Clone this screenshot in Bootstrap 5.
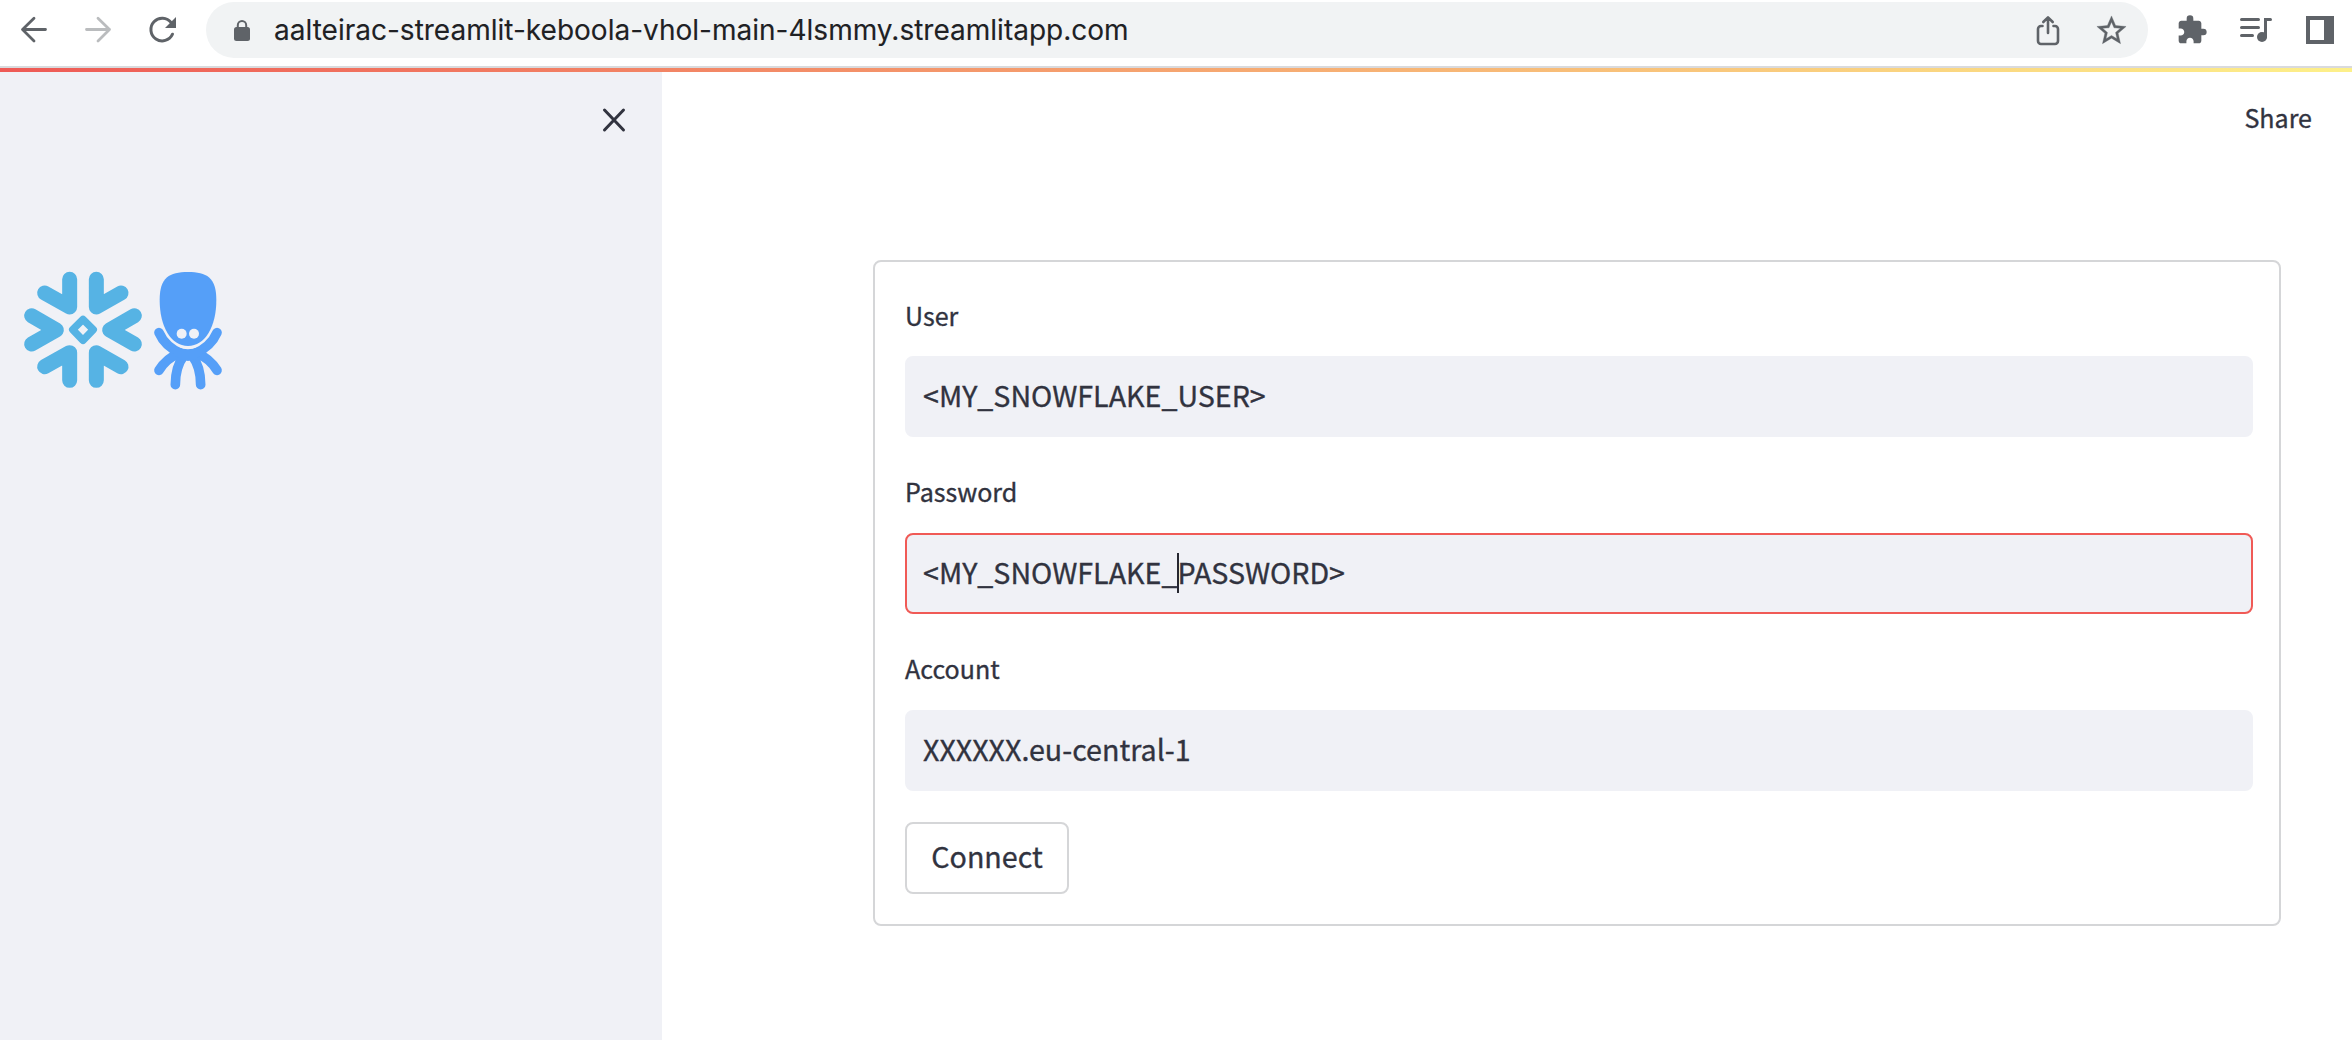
<!DOCTYPE html>
<html lang="en">
<head>
<meta charset="utf-8">
<title>Streamlit Keboola VHOL</title>
<link href="https://cdn.jsdelivr.net/npm/bootstrap@5.3.0/dist/css/bootstrap.min.css" rel="stylesheet">
<style>
body{font-family:"Noto Sans CJK SC","Noto Sans CJK JP",sans-serif;color:#31333f;height:1040px;overflow:hidden;-webkit-text-stroke:.35px currentColor}
svg{display:block;flex:none}
.toolbar{height:68px;border-bottom:2px solid #d9dadd;color:#5f6368}
.toolbar-inner{height:60px;padding:2px 18px}
.icon-forward{margin-left:32px}
.icon-reload{margin-left:33px}
.icon-extensions{margin-left:28px}
.icon-queue{margin-left:31px}
.icon-panel{margin-left:33px}
.omnibox{height:56px;border-radius:28px;background:#f1f3f4;width:1942px;margin-left:27px;padding:0 19px 0 26px}
.omnibox-actions{gap:30px}
.url{font-family:Inter,sans-serif;font-size:28.03px;line-height:56px;color:#202124;margin-left:22px;white-space:nowrap;-webkit-text-stroke:.1px currentColor}
.deco{height:4px;background:linear-gradient(90deg,#ee5a56,#fdf08a)}
.sidebar{width:662px;background:#f0f1f6}
.sidebar-close{margin:9px 8px 0 0}
.logo{margin-top:113px}
.login{width:1408px;margin:188px 71px 0 0;border:2px solid #d5d6d8;border-radius:8px;height:666px;padding:34px 26px 0 30px}
.field-label{font-size:25.06px;line-height:38px;height:38px;margin:0 0 22px}
.field-group + .field-group .field-label{height:39px;margin-top:-1px}
.field{display:block;font-size:28.64px;line-height:40px;height:80.5px;border:2px solid #f0f1f6;border-radius:8px;background:#f0f1f6;padding:0 16px 3px;color:#31333f;-webkit-text-stroke:.35px currentColor}
.field.active{border-color:#f05a56}
.field-group{height:177px}
.caret{left:272px;top:20px;width:2px;height:40px;background:#262730}
.connect{width:164px;height:72px;margin-top:-5px;border:2px solid #d5d6d8;border-radius:8px;font-size:28.64px;line-height:40px;padding:0 0 5px;color:#31333f;background:#fff;-webkit-text-stroke:.35px currentColor}
.share-link{font-size:25.06px;line-height:38px;color:#31333f;text-decoration:none;padding-top:2px}
</style>
</head>
<body class="bg-white d-flex flex-column">
<header class="toolbar flex-shrink-0">
 <div class="toolbar-inner d-flex align-items-center">
  <svg width="32" height="32" viewBox="0 0 32 32" fill="none" stroke="currentColor" stroke-width="2.8" stroke-linecap="round" stroke-linejoin="round"><path d="M27.500 15.500H5M16 4.300L4.500 15.500L16 27"/></svg>
  <svg class="icon-forward" width="32" height="32" viewBox="0 0 32 32" fill="none" stroke="#babcbe" stroke-width="2.800" stroke-linecap="round" stroke-linejoin="round"><path d="M4.500 15.500h23M16 4.300L27.500 15.500L16 27"/></svg>
  <svg class="icon-reload" width="32" height="32" viewBox="0 0 32 32"><path d="M25.500 20.200A11.300 11.300 0 1 1 24.200 8.700" fill="none" stroke="currentColor" stroke-width="3" stroke-linecap="round"/><path d="M29 3v11H18z" fill="currentColor"/></svg>
  <div class="omnibox d-flex align-items-center flex-shrink-0">
   <svg width="20" height="24" viewBox="0 0 20 24"><path d="M5.800 10V7.200a4.200 4.200 0 0 1 8.400 0V10" fill="none" stroke="currentColor" stroke-width="2"/><rect x="2" y="9" width="16" height="14" rx="2.500" fill="currentColor"/></svg>
   <span class="url">aalteirac-streamlit-keboola-vhol-main-4lsmmy.streamlitapp.com</span>
   <div class="omnibox-actions d-flex align-items-center ms-auto">
   <svg width="32" height="32" viewBox="0 0 32 32" fill="none" stroke="currentColor" stroke-width="2.600" stroke-linecap="round" stroke-linejoin="round"><path d="M16 19V4M11.300 8L16 3.300L20.700 8M10.500 12H9a3 3 0 0 0-3 3v12a3 3 0 0 0 3 3h14a3 3 0 0 0 3-3V15a3 3 0 0 0-3-3h-1.500"/></svg>
   <svg width="35" height="35" viewBox="0 0 24 24" fill="currentColor" stroke="currentColor" stroke-width=".25"><path d="M22 9.240l-7.190-.62L12 2 9.190 8.630 2 9.240l5.460 4.730L5.820 21 12 17.270 18.180 21l-1.630-7.030L22 9.240zM12 15.400l-3.760 2.270 1-4.280-3.320-2.880 4.380-.38L12 6.100l1.710 4.040 4.380.38-3.320 2.880 1 4.280L12 15.400z"/></svg>
   </div>
  </div>
  <svg class="icon-extensions" width="32" height="32" viewBox="0 0 24 24" fill="currentColor"><path d="M20.500 11H19V7c0-1.100-.9-2-2-2h-4V3.500a2.500 2.500 0 0 0-5 0V5H4c-1.100 0-1.990.9-1.990 2v3.800H3.500c1.490 0 2.700 1.210 2.700 2.700s-1.210 2.700-2.700 2.700H2V20c0 1.100.9 2 2 2h3.800v-1.500c0-1.490 1.210-2.700 2.700-2.700s2.700 1.210 2.700 2.700V22H17c1.100 0 2-.9 2-2v-4h1.500a2.500 2.500 0 0 0 0-5z"/></svg>
  <svg class="icon-queue" width="34" height="32" viewBox="0 0 34 32"><path d="M2.500 5.500h17M2.500 13.500h17M2.500 21.500h11M26.500 23V5.500h5" fill="none" stroke="currentColor" stroke-width="3" stroke-linecap="round"/><circle cx="23" cy="23" r="5" fill="currentColor"/></svg>
  <svg class="icon-panel" width="28" height="28" viewBox="0 0 28 28"><path d="M0 0h28v28H0zM4 4v20h14V4z" fill="currentColor" fill-rule="evenodd"/></svg>
 </div>
</header>
<div class="deco flex-shrink-0"></div>
<div class="d-flex flex-grow-1">
 <aside class="sidebar flex-shrink-0">
  <div class="d-flex justify-content-end pt-4 pe-4">
   <svg class="sidebar-close" width="32" height="32" viewBox="0 0 32 32" fill="none" stroke="#31333f" stroke-width="3" stroke-linecap="round"><path d="M6.500 5l19 20M25.500 5L6.500 25"/></svg>
  </div>
  <svg class="logo" width="250" height="160" viewBox="0 0 750 480">
   <g fill="none" stroke="#56b3e4" stroke-width="45" stroke-linecap="round" stroke-linejoin="round">
    <path d="M209 88V171L134 129M289 88V171L363 129M209 391V308L134 350M289 391V308L363 350M95 197L169 240L95 282M403 197L329 240L403 282"/>
   </g>
   <path d="M249 208L280 239L249 271L218 239Z" fill="none" stroke="#56b3e4" stroke-width="22" stroke-linejoin="round"/>
   <g fill="none" stroke="#559ff8" stroke-width="29" stroke-linecap="round">
    <path d="M477 248Q495 290 545 312M651 248Q633 290 583 312M477 361Q498 326 540 308M651 361Q630 326 588 308M526 404Q526 350 552 316M602 404Q602 350 576 316"/>
   </g>
   <path d="M500 275Q564 320 628 275L610 310Q590 330 564 333Q538 330 518 310Z" fill="#559ff8"/>
   <path d="M564 66C620 66 649 82 649 150C649 230 615 288 564 288C513 288 479 230 479 150C479 82 508 66 564 66Z" fill="#559ff8" stroke="#f0f1f6" stroke-width="9" paint-order="stroke"/>
   <circle cx="545" cy="251" r="15" fill="#f0f1f6"/><circle cx="582" cy="251" r="15" fill="#f0f1f6"/>
  </svg>
 </aside>
 <main class="flex-grow-1 position-relative d-flex justify-content-end align-items-start">
  <a class="share-link position-absolute top-0 end-0 mt-4 me-4 pe-3" href="#">Share</a>
  <form class="login">
   <div class="field-group d-flex flex-column">
    <label class="field-label" for="user">User</label>
    <input class="field w-100" id="user" value="&lt;MY_SNOWFLAKE_USER&gt;">
   </div>
   <div class="field-group d-flex flex-column">
    <label class="field-label" for="pass">Password</label>
    <div class="position-relative"><input class="field active w-100" id="pass" value="&lt;MY_SNOWFLAKE_PASSWORD&gt;"><span class="caret position-absolute"></span></div>
   </div>
   <div class="field-group d-flex flex-column">
    <label class="field-label" for="account">Account</label>
    <input class="field w-100" id="account" value="XXXXXX.eu-central-1">
   </div>
   <button class="connect d-block" type="button">Connect</button>
  </form>
 </main>
</div>
<script src="https://cdn.jsdelivr.net/npm/bootstrap@5.3.0/dist/js/bootstrap.bundle.min.js"></script>
</body>
</html>
